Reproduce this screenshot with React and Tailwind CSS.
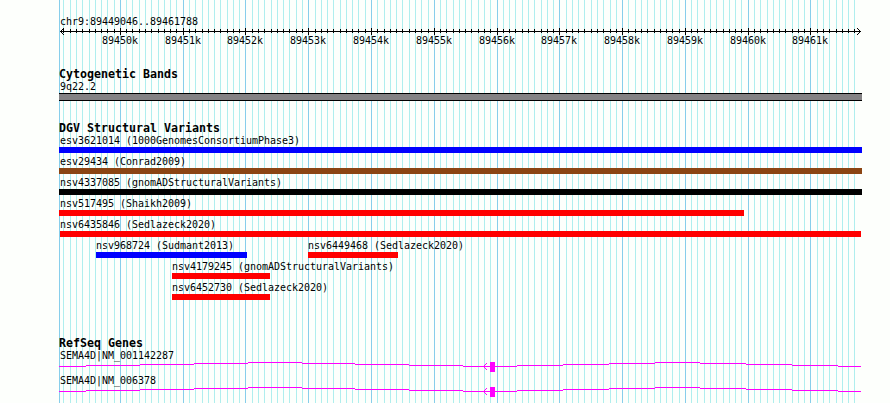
import React from 'react';

const START = 89449046;
const END = 89461788;
const WIDTH = 800;

const toX = (pos) => Math.round(((pos - START) * WIDTH) / (END - START + 1)) + 1;

const ticks = [];
for (let pos = Math.ceil(START / 100) * 100; pos <= END; pos += 100) {
  ticks.push({ pos, x: toX(pos), major: pos % 1000 === 0 });
}
const majorTicks = ticks.filter((t) => t.major);

// One entry per row, offsets and widths in px from the left edge of the panel
const variantRows = [
  [{ name: 'esv3621014 (1000GenomesConsortiumPhase3)', start: 0, width: 803, color: 'bg-[#0000ff]' }],
  [{ name: 'esv29434 (Conrad2009)', start: 0, width: 803, color: 'bg-[#8b4513]' }],
  [{ name: 'nsv4337085 (gnomADStructuralVariants)', start: 0, width: 803, color: 'bg-black' }],
  [{ name: 'nsv517495 (Shaikh2009)', start: 0, width: 685, color: 'bg-[#ff0000]' }],
  [{ name: 'nsv6435846 (Sedlazeck2020)', start: 1, width: 801, color: 'bg-[#ff0000]' }],
  [
    { name: 'nsv968724 (Sudmant2013)', start: 37, width: 151, color: 'bg-[#0000ff]' },
    { name: 'nsv6449468 (Sedlazeck2020)', start: 249, width: 90, color: 'bg-[#ff0000]' },
  ],
  [{ name: 'nsv4179245 (gnomADStructuralVariants)', start: 113, width: 98, color: 'bg-[#ff0000]' }],
  [{ name: 'nsv6452730 (Sedlazeck2020)', start: 113, width: 98, color: 'bg-[#ff0000]' }],
];

const genes = ['SEMA4D|NM_001142287', 'SEMA4D|NM_006378'];

// [x, y, width] runs of the intron line
const intronRuns = [
  [0, 4, 27], [27, 3, 54], [81, 2, 54], [135, 1, 54], [189, 0, 54],
  [243, 1, 53], [296, 2, 54], [350, 3, 54], [404, 4, 54], [458, 3, 46],
  [504, 2, 46], [550, 1, 46], [596, 0, 45], [641, 1, 46], [687, 2, 46],
  [733, 3, 46], [779, 4, 23],
];

const GridLines = () => (
  <svg className="absolute left-0 top-0" width="803" height="403" shapeRendering="crispEdges">
    <rect x="0" y="0" width="1" height="403" fill="#87ceeb" />
    {ticks.map((t) => (
      <rect key={t.pos} x={t.x} y="0" width="1" height="403" fill={t.major ? '#87ceeb' : '#afeeee'} />
    ))}
  </svg>
);

const Ruler = () => (
  <svg className="block" width="803" height="20" shapeRendering="crispEdges">
    <rect x="1" y="4" width="801" height="1" />
    {[1, 2, 3].map((i) => (
      <g key={i}>
        <rect x={1 + i} y={4 - i} width="1" height="1" />
        <rect x={1 + i} y={4 + i} width="1" height="1" />
        <rect x={801 - i} y={4 - i} width="1" height="1" />
        <rect x={801 - i} y={4 + i} width="1" height="1" />
      </g>
    ))}
    {ticks.map((t) => (
      <rect key={t.pos} x={t.x} y={t.major ? 1 : 2} width="1" height={t.major ? 7 : 4} />
    ))}
    {majorTicks.map((t) => (
      <text key={t.pos} x={t.x - 18} y="17" fontSize="10">
        {t.pos / 1000}k
      </text>
    ))}
  </svg>
);

const TrackTitle = ({ children }) => (
  <h2 className="h-[13px] text-[11.63px] leading-[13px] font-bold tracking-normal">{children}</h2>
);

const Variant = ({ name, start, width, color }) => (
  <div style={{ width }}>
    <p className={`h-3 leading-3 ${start === 0 ? 'pl-px' : ''}`}>{name}</p>
    <div className={`h-1.5 ${color}`}></div>
  </div>
);

const Gene = ({ name }) => (
  <div className="h-[25px]">
    <p className="h-3 pl-px leading-3">{name}</p>
    <svg className="block" width="803" height="12" shapeRendering="crispEdges" fill="#ff00ff">
      {intronRuns.map(([x, y, width]) => (
        <rect key={x} x={x} y={y} width={width} height="1" />
      ))}
      <rect x="431" y="0" width="5" height="10" />
      <path d="M424 4h1v1h-1zM425 3h1v1h-1zM425 5h1v1h-1zM426 2h1v1h-1zM426 6h1v1h-1zM427 1h1v1h-1zM427 7h1v1h-1z" />
    </svg>
  </div>
);

const App = () => {
  return (
    <div className="h-[403px] w-[890px] overflow-hidden bg-[#fdfffc] pl-[59px] font-['DejaVu_Sans_Mono',monospace] text-[10px] tracking-[-0.02px] whitespace-nowrap text-black">
      <div className="relative h-full w-[803px]">
        <GridLines />

        <div className="relative pt-4">
          <p className="h-[11px] pl-px leading-3">chr9:{START}..{END}</p>
          <Ruler />

          {/* Cytogenetic bands */}
          <div className="mt-[21px]">
            <TrackTitle>Cytogenetic Bands</TrackTitle>
            <p className="h-3 pl-px leading-3">9q22.2</p>
            <div className="h-2 border-y border-black bg-[#848284]"></div>
          </div>

          {/* Structural variants */}
          <div className="mt-[21px]">
            <TrackTitle>DGV Structural Variants</TrackTitle>
            {variantRows.map((row) => (
              <div key={row[0].name} className="flex h-[21px]">
                {row.map((v, i) => (
                  <div
                    key={v.name}
                    style={{ marginLeft: i === 0 ? v.start : v.start - row[i - 1].start - row[i - 1].width }}
                  >
                    <Variant {...v} />
                  </div>
                ))}
              </div>
            ))}
          </div>

          {/* Genes */}
          <div className="mt-[34px]">
            <TrackTitle>RefSeq Genes</TrackTitle>
            {genes.map((name) => (
              <Gene key={name} name={name} />
            ))}
          </div>
        </div>
      </div>
    </div>
  );
};

export default App;
